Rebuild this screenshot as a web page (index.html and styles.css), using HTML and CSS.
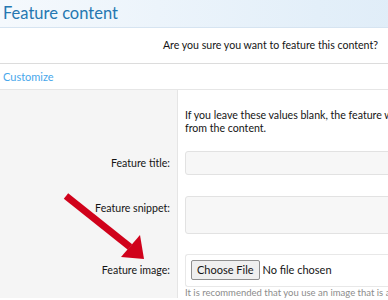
FILE: index.html
```html
<!DOCTYPE html>
<html lang="en">
<head>
    <meta charset="UTF-8">
    <meta name="viewport" content="width=device-width, initial-scale=1.0">
    <title>Feature content</title>
    <link rel="stylesheet" href="styles.css">
</head>
<body>
    <div class="overlay">
        <h1 class="overlay-title">Feature content</h1>

        <div class="confirm-row">Are you sure you want to feature this content?</div>

        <h2 class="block-header">Customize</h2>

        <div class="form-row row-explain">
            <div class="row-label"></div>
            <div class="row-input"><p class="explain">If you leave these values blank, the feature will be generated automatically from the content.</p></div>
        </div>

        <div class="form-row">
            <div class="row-label"><label for="feature_title">Feature title:</label></div>
            <div class="row-input"><input type="text" id="feature_title" class="input"></div>
        </div>

        <div class="form-row">
            <div class="row-label"><label for="feature_snippet">Feature snippet:</label></div>
            <div class="row-input"><textarea id="feature_snippet" class="input textarea"></textarea></div>
        </div>

        <div class="form-row row-file">
            <div class="row-label"><label>Feature image:</label></div>
            <div class="row-input">
                <div class="file-field"><span class="file-btn">Choose File</span> No file chosen</div>
                <p class="hint">It is recommended that you use an image that is at least 800x400 pixels.</p>
            </div>
        </div>

        <svg class="arrow" width="90" height="70" viewBox="0 0 90 70">
            <line x1="4" y1="3" x2="68" y2="54" stroke="#d0021b" stroke-width="7"/>
            <polygon points="82,66 59,64 78,42" fill="#d0021b"/>
        </svg>
    </div>
</body>
</html>
```

FILE: styles.css
```css
html, body {
    overflow: hidden;
}
body {
    margin: 0;
    font-family: Lato, "Open Sans", sans-serif;
    font-size: 10.6px;
    color: #141414;
    background: #fff;
}
.overlay {
    position: relative;
    width: 530px;
}
.overlay-title {
    margin: 0;
    height: 28px;
    padding-left: 3px;
    font-size: 16.5px;
    font-weight: normal;
    line-height: 26px;
    color: #2577b1;
    background: linear-gradient(to right, #f5f9fd, #e3eff9 60%, #dbeaf7);
    border-bottom: 1px solid #d6e4f1;
    box-sizing: border-box;
}
.confirm-row {
    height: 36px;
    line-height: 35px;
    padding-right: 152px;
    text-align: right;
    border-bottom: 1px solid #dcdcdc;
    box-sizing: border-box;
}
.block-header {
    margin: 0;
    height: 26px;
    line-height: 25px;
    padding-left: 3px;
    font-size: 11px;
    font-weight: normal;
    color: #47a7eb;
    border-bottom: 1px solid #e6e6e6;
    box-sizing: border-box;
}
.form-row {
    display: flex;
}
.row-label {
    width: 178px;
    flex: none;
    background: #f5f5f5;
    border-right: 1px solid #e5e5e5;
    text-align: right;
    padding: 6px 7px 0 0;
    box-sizing: border-box;
}
.row-input {
    flex: 1;
    padding-left: 7px;
}
.explain {
    margin: 0;
    padding: 19px 0 0;
    height: 61px;
    box-sizing: border-box;
    line-height: 13px;
}
.input {
    display: block;
    width: 100%;
    height: 24px;
    margin: 0 0 21px;
    border: 1px solid #e2e2e2;
    border-radius: 3px;
    background: #f7f7f7;
    box-sizing: border-box;
    font-family: inherit;
}
.textarea {
    height: 38px;
    resize: none;
    margin-bottom: 20px;
}
.row-file .row-label {
    padding-top: 10px;
}
.file-field {
    height: 33px;
    padding: 5px 0 0 5px;
    border: 1px solid #e8e8e8;
    border-right: none;
    border-radius: 3px 0 0 3px;
    box-sizing: border-box;
    font-size: 11px;
}
.file-btn {
    display: inline-block;
    height: 20px;
    line-height: 18px;
    padding: 0 5px;
    border: 1px solid #8f8f8f;
    border-radius: 2px;
    background: #efefef;
    box-sizing: border-box;
}
.hint {
    margin: 0;
    font-size: 9.5px;
    color: #8c8c8c;
}
.arrow {
    position: absolute;
    left: 62px;
    top: 193px;
}
```
